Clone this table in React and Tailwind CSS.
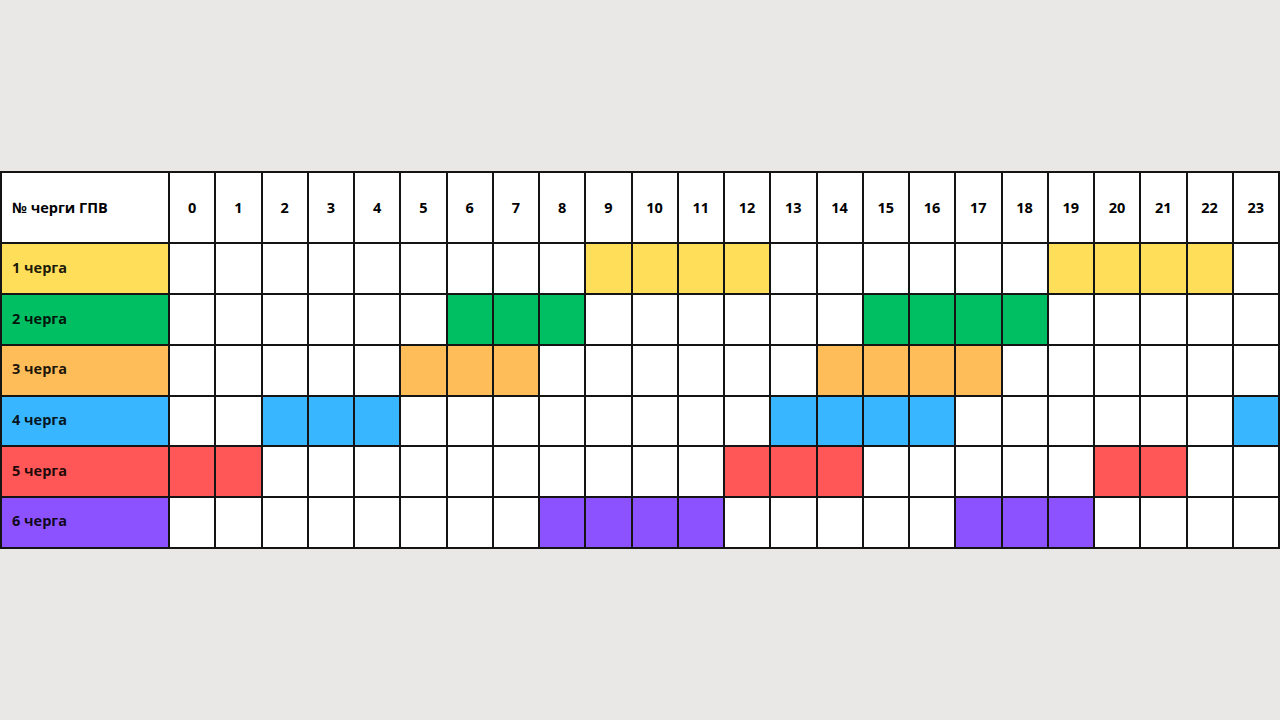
const hours = Array.from({ length: 24 }, (_, i) => i)

// черги та години відключень
const queues = [
  { name: '1 черга', bg: 'bg-[#ffde59]', on: [9, 10, 11, 12, 19, 20, 21, 22] },
  { name: '2 черга', bg: 'bg-[#00bf63]', on: [6, 7, 8, 15, 16, 17, 18] },
  { name: '3 черга', bg: 'bg-[#ffbd59]', on: [5, 6, 7, 14, 15, 16, 17] },
  { name: '4 черга', bg: 'bg-[#38b6ff]', on: [2, 3, 4, 13, 14, 15, 16, 23] },
  { name: '5 черга', bg: 'bg-[#ff5757]', on: [0, 1, 12, 13, 14, 20, 21] },
  { name: '6 черга', bg: 'bg-[#8c52ff]', on: [8, 9, 10, 11, 17, 18, 19] },
]

const App = () => {
  return (
    <div className="h-screen w-full bg-[#e9e8e6] flex items-center font-['Open_Sans',sans-serif]">
      <div className="w-full grid grid-cols-[168px_repeat(24,1fr)] grid-rows-[71px_repeat(6,50.7px)] border-l-2 border-t-2 border-[#141414]">
        <div className="bg-white border-r-2 border-b-2 border-[#141414] flex items-center pl-[10px] text-[14.5px] font-bold text-black">
          № черги ГПВ
        </div>
        {hours.map((h) => (
          <div
            key={h}
            className="bg-white border-r-2 border-b-2 border-[#141414] flex items-center justify-center text-[14.5px] font-bold text-black"
          >
            {h}
          </div>
        ))}
        {queues.map((q) => (
          <>
            <div
              key={q.name}
              className={`${q.bg} border-r-2 border-b-2 border-[#141414] flex items-center pl-[10px] pb-[2px] text-[14.5px] font-bold text-black/90`}
            >
              {q.name}
            </div>
            {hours.map((h) => (
              <div
                key={q.name + h}
                className={`${q.on.includes(h) ? q.bg : 'bg-white'} border-r-2 border-b-2 border-[#141414]`}
              />
            ))}
          </>
        ))}
      </div>
    </div>
  )
}

export default App
